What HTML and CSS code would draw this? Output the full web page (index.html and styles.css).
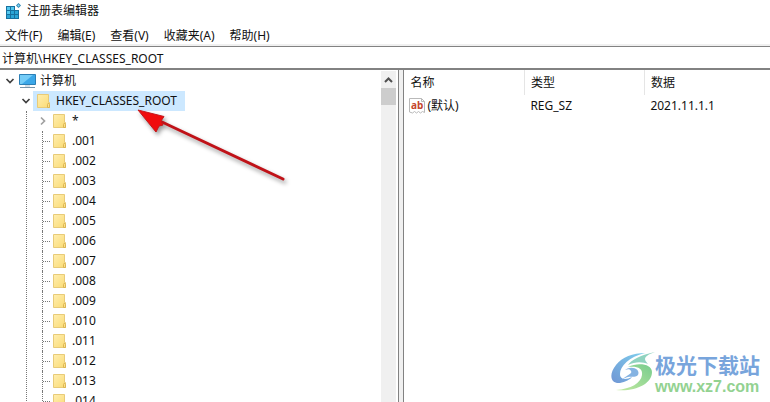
FILE: index.html
```
<!DOCTYPE html>
<html lang="zh-CN">
<head>
    <meta charset="UTF-8">
    <meta name="viewport" content="width=device-width, initial-scale=1.0">
    <title>注册表编辑器</title>
    <link rel="stylesheet" href="styles.css">
</head>
<body>

    <!-- shared icons -->
    <svg class="defs" width="0" height="0">
        <linearGradient id="paper" x1="0" y1="0" x2="1" y2="1">
            <stop offset="0" stop-color="#ffeeb0"/>
            <stop offset="1" stop-color="#fadb74"/>
        </linearGradient>
        <symbol id="folder" viewBox="0 0 14 16">
            <path d="M.5 1.5h11v8h1v5h-12z" fill="url(#paper)" stroke="#e8cb78"/>
            <path d="M10.500 14.500v-3l1-1.500 1 1.500v3z" fill="#fbe08a" stroke="#dcb653"/>
        </symbol>
        <symbol id="chevron" viewBox="0 0 10 10">
            <path d="M1.500 3l3.500 3.500L8.500 3" fill="none" stroke="currentColor" stroke-width="1.700"/>
        </symbol>
    </svg>

    <header class="titlebar">
        <svg class="app-icon" viewBox="0 0 16 16">
            <path d="M1 3h9v4h4v9H1z" fill="#18719f"/>
            <path d="M2 4h3v3H2zM6 4h3v3H6zM2 8h3v3H2z" fill="#53c8ef"/>
            <path d="M6 8h3v3H6zM2 12h3v3H2zM6 12h3v3H6zM10 8h3v3h-3zM10 12h3v3h-3z" fill="#2ba5d6"/>
            <path d="M13.500 0L16 2.500 13.500 5 11 2.500z" fill="#2a86b5"/>
            <path d="M13.500 1.300l1.200 1.200-1.200 1.200-1.200-1.200z" fill="#8ddcf5"/>
        </svg>
        <span>注册表编辑器</span>
    </header>

    <nav class="menu">
        <button class="menu-item">文件(F)</button>
        <button class="menu-item">编辑(E)</button>
        <button class="menu-item">查看(V)</button>
        <button class="menu-item">收藏夹(A)</button>
        <button class="menu-item">帮助(H)</button>
    </nav>

    <input class="address" type="text" aria-label="地址" value="计算机\HKEY_CLASSES_ROOT">

    <main class="panes">
        <section class="tree-pane">
            <div class="tree">
                <div class="row">
                    <svg class="chevron"><use href="#chevron"/></svg>
                    <svg class="computer" viewBox="0 0 17 16">
                        <path d="M.5 1.500h16v10H.5z" fill="#3ba7e8" stroke="#2c7fb5"/>
                        <path d="M1 2h13L3 11H1z" fill="#74ccf7"/>
                        <path d="M6 12h5v2H6z" fill="#d3dde5"/>
                        <path d="M1 14.500h15" stroke="#7794aa"/>
                    </svg>
                    <span>计算机</span>
                </div>
                <div class="branch">
                    <div class="row">
                        <svg class="chevron"><use href="#chevron"/></svg>
                        <span class="selected"><svg class="folder"><use href="#folder"/></svg>HKEY_CLASSES_ROOT</span>
                    </div>
                    <ul class="keys">
                        <li class="key parent"><svg class="chevron closed"><use href="#chevron"/></svg><svg class="folder"><use href="#folder"/></svg>*</li>
                        <li class="key"><svg class="folder"><use href="#folder"/></svg>.001</li>
                        <li class="key"><svg class="folder"><use href="#folder"/></svg>.002</li>
                        <li class="key"><svg class="folder"><use href="#folder"/></svg>.003</li>
                        <li class="key"><svg class="folder"><use href="#folder"/></svg>.004</li>
                        <li class="key"><svg class="folder"><use href="#folder"/></svg>.005</li>
                        <li class="key"><svg class="folder"><use href="#folder"/></svg>.006</li>
                        <li class="key"><svg class="folder"><use href="#folder"/></svg>.007</li>
                        <li class="key"><svg class="folder"><use href="#folder"/></svg>.008</li>
                        <li class="key"><svg class="folder"><use href="#folder"/></svg>.009</li>
                        <li class="key"><svg class="folder"><use href="#folder"/></svg>.010</li>
                        <li class="key"><svg class="folder"><use href="#folder"/></svg>.011</li>
                        <li class="key"><svg class="folder"><use href="#folder"/></svg>.012</li>
                        <li class="key"><svg class="folder"><use href="#folder"/></svg>.013</li>
                        <li class="key"><svg class="folder"><use href="#folder"/></svg>.014</li>
                    </ul>
                </div>
            </div>
            <div class="scrollbar">
                <button class="scroll-up" aria-label="向上滚动">
                    <svg viewBox="0 0 15 17"><path d="M4 11L7.500 7.500l3.500 3.500" fill="none" stroke="#505050" stroke-width="2"/></svg>
                </button>
                <div class="thumb"></div>
            </div>
        </section>

        <section class="value-pane">
            <table class="values">
                <thead>
                    <tr>
                        <th class="name">名称</th>
                        <th class="type">类型</th>
                        <th>数据</th>
                    </tr>
                </thead>
                <tbody>
                    <tr>
                        <td class="name">
                            <div class="value-name">
                                <svg class="string-icon" viewBox="0 0 16 16">
                                    <path d="M.5.5h12l3 3v11l-2-1-2 1.500-2-1.500-2 1.500-2-1.500-2 1.500-3-1z" fill="#fff" stroke="#b9b9b9"/>
                                    <path d="M12.500.5v3h3" fill="none" stroke="#b9b9b9"/>
                                    <text x="2" y="11">ab</text>
                                </svg>
                                <span>(默认)</span>
                            </div>
                        </td>
                        <td>REG_SZ</td>
                        <td>2021.11.1.1</td>
                    </tr>
                </tbody>
            </table>
        </section>
    </main>

    <!-- red pointer over the tree -->
    <svg class="pointer" viewBox="0 0 160 90">
        <path d="M26 16L147 73" stroke="#c01218" stroke-width="3" stroke-linecap="round"/>
        <path d="M2 4L28 10.500 25 15 27 19 23 20 20 26z" fill="#f00d0d" stroke="#c5171b"/>
    </svg>

    <div class="watermark">
        <svg class="logo" viewBox="0 0 44 40">
            <linearGradient id="sky" x1="1" y1="0" x2="0" y2="1">
                <stop offset="0" stop-color="#7fd0ee"/>
                <stop offset="1" stop-color="#7096d4"/>
            </linearGradient>
            <linearGradient id="grass" x1="0" y1="1" x2="1" y2="0">
                <stop offset="0" stop-color="#c4eaa0"/>
                <stop offset="1" stop-color="#78cc8e"/>
            </linearGradient>
            <path d="M34 1C22 1 11 5 5 13C-3 23 0 32 9 31C14 30 20 27 21 25C15 28 9 28 9 22C9 14 18 5 34 1z" fill="url(#sky)"/>
            <path d="M17 15C27 10 41 12 41 20C41 32 24 40 5 38C20 37 30 31 31 23C32 16 26 14 17 15z" fill="url(#grass)"/>
            <path d="M14 18C20 13 30 17 27 23C23 27 18 22 11 28C15 23 22 22 20 19C19 17 17 17 14 18z" fill="#85b3e2"/>
            <path d="M44 0C30 3 20 8 17 13C25 9 32 10 37 12C34 8 30 5 44 0z" fill="#90d3c0"/>
        </svg>
        <div class="site">
            <strong class="site-name">极光下载站</strong>
            <span class="site-url">www.xz7.com</span>
        </div>
    </div>

</body>
</html>
```
FILE: styles.css
```
* {
    box-sizing: border-box;
}

body {
    margin: 0;
    height: 100vh;
    display: flex;
    flex-direction: column;
    overflow: hidden;
    background: #fff;
    color: #111;
    font-family: "Noto Sans", "Noto Sans CJK SC", sans-serif;
    font-size: 12px;
    line-height: 20px;
}

button,
input {
    font: inherit;
    color: inherit;
    border: none;
    background: none;
    padding: 0;
}

svg {
    display: block;
    flex: none;
}

.defs {
    position: absolute;
}

.titlebar {
    display: flex;
    align-items: center;
    gap: 6px;
    height: 22px;
    padding-left: 5px;
}

.app-icon {
    width: 16px;
    height: 16px;
}

.menu {
    display: flex;
    gap: 15px;
    height: 24px;
    padding: 4px 5px 0;
    border-bottom: 2px solid #f0f0f0;
}

.menu-item {
    height: 20px;
}

.address {
    flex: none;
    width: 100%;
    height: 24px;
    padding: 0 2px;
    border-top: 1px solid #828282;
    border-bottom: 2px solid #828282;
    outline: none;
}

.panes {
    flex: 1;
    min-height: 0;
    display: flex;
    gap: 4px;
    background: #f0f0f0;
}

.tree-pane {
    flex: 0 0 calc(52% - 1px);
    display: flex;
    justify-content: space-between;
    padding: 1px 2px 0 0;
    border-right: 1px solid #828282;
    background: #fff;
    overflow: hidden;
}

.tree {
    padding-left: 5px;
}

.row {
    display: flex;
    align-items: center;
    height: 20px;
}

.chevron {
    width: 10px;
    height: 10px;
    color: #404040;
}

.computer {
    width: 17px;
    height: 16px;
    margin: 0 4px;
}

.folder {
    width: 14px;
    height: 16px;
    margin-right: 5px;
}

.branch {
    padding-left: 16px;
}

.selected {
    display: flex;
    align-items: center;
    height: 20px;
    margin-left: 2px;
    padding: 0 8px 0 4px;
    background: #cce8ff;
}

.keys {
    list-style: none;
    margin: 0 0 0 5px;
    padding: 0 0 0 15px;
    border-left: 1px dotted #777;
}

.key {
    display: flex;
    align-items: center;
    height: 20px;
    border-left: 1px dotted #777;
}

/* short dotted line from the trunk to the folder */
.key::before {
    content: "";
    width: 7px;
    margin-right: 3px;
    border-top: 1px dotted #777;
}

.key.parent {
    border-left: none;
}

.key.parent::before {
    display: none;
}

.closed {
    margin: 0 5px 0 -4px;
    color: #a0a0a0;
    transform: rotate(-90deg);
}

.scrollbar {
    width: 15px;
    background: #f0f0f0;
}

.scroll-up {
    display: block;
    width: 15px;
    height: 17px;
}

.thumb {
    height: 17px;
    background: #cdcdcd;
}

.value-pane {
    flex: 1;
    border-left: 1px solid #828282;
    background: #fff;
}

.values {
    width: 100%;
    table-layout: fixed;
    border-collapse: collapse;
}

.values th {
    height: 25px;
    padding: 1px 0 0 6px;
    border-right: 1px solid #e5e5e5;
    font-weight: normal;
    text-align: left;
}

.values th:last-child {
    border-right: none;
}

.values td {
    height: 22px;
    padding: 0 0 0 6px;
}

.values .name,
.values .type {
    width: 120px;
}

.values td.name {
    padding-left: 5px;
}

.value-name {
    display: flex;
    align-items: center;
    gap: 2px;
}

.string-icon {
    width: 16px;
    height: 16px;
}

.string-icon text {
    font: bold 10px "Noto Sans", sans-serif;
    fill: #c5452c;
}

.pointer {
    position: absolute;
    top: 106px;
    left: 136px;
    width: 160px;
    height: 90px;
    filter: drop-shadow(2px 3px 2px rgba(0, 0, 0, 0.4));
}

.watermark {
    position: absolute;
    right: 10px;
    bottom: 4px;
    display: flex;
}

.logo {
    width: 44px;
    height: 40px;
}

.site {
    display: flex;
    flex-direction: column;
}

.site-name {
    font-family: "Noto Sans CJK SC", sans-serif;
    font-size: 21px;
    line-height: 24px;
    color: #78a5dc;
}

.site-url {
    font-family: "Liberation Sans", sans-serif;
    font-size: 16px;
    font-weight: bold;
    line-height: 22px;
    color: #93d291;
}
```
